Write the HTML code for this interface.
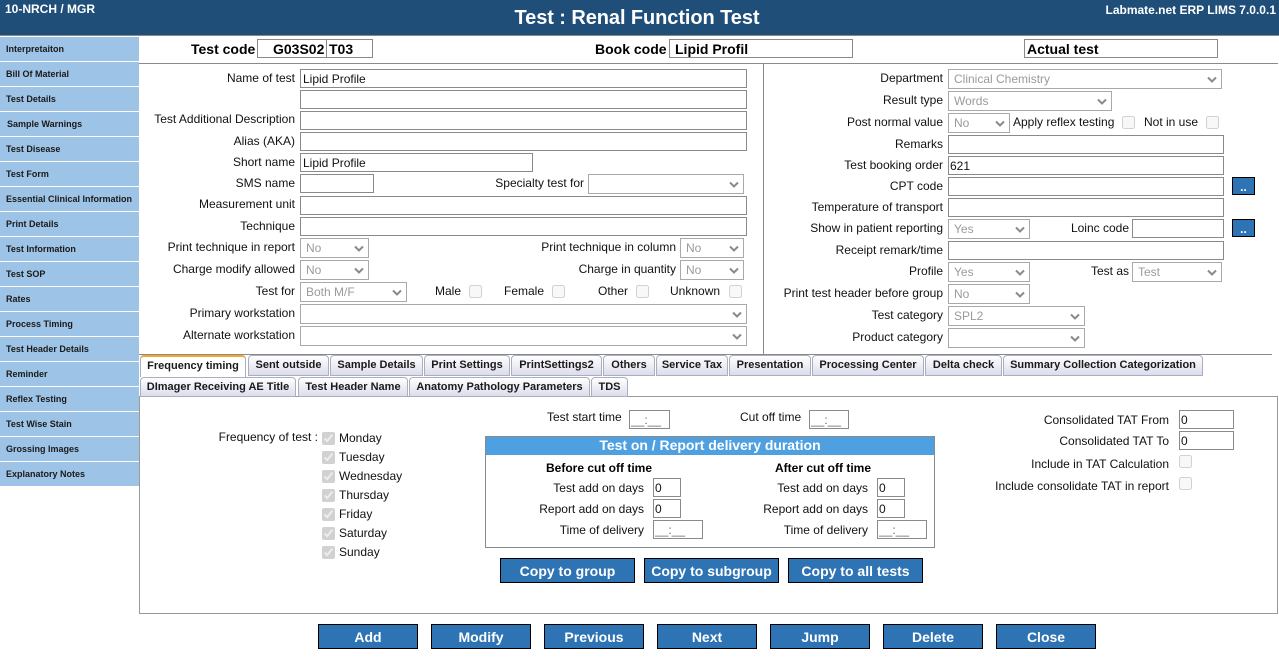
<!DOCTYPE html>
<html><head><meta charset="utf-8"><style>
html,body{margin:0;padding:0;width:1279px;height:657px;overflow:hidden;background:#fff;font-family:"Liberation Sans",Arial,sans-serif;font-size:12px;color:#111}
body{position:relative}
div,span,input{position:absolute;box-sizing:border-box}
.l{height:14px;line-height:14px;white-space:nowrap}
.a{right:984px}.b{right:336px}
.i{border:1px solid #8a8a8a;background:#fff;padding:0 0 0 1px;line-height:18px;white-space:nowrap;height:19px}
.s{border:1px solid #a9a9a9;background:#fff;color:#9a9a9a;padding-left:5px;line-height:18px;height:20px;white-space:nowrap}
.s svg{position:absolute;right:4px;top:6px;width:10px;height:7px}
input[type=checkbox]{margin:0;width:13px;height:13px}
.n{left:0;width:139px;height:24px;background:#9dc3e6;font-weight:bold;font-size:9px;line-height:23px;padding:1px 0 0 6px;color:#1a1a1a;white-space:nowrap}
.t{height:21px;border:1px solid #a8b0c0;border-bottom:1px solid #a8b0c0;border-radius:4px 4px 0 0;background:linear-gradient(#fff,#dcdcec);font-weight:bold;font-size:11px;line-height:19px;text-align:center;white-space:nowrap;color:#1a1a1a}
.btn{background:#2e74b5;border:1px solid #000;color:#fff;font-weight:bold;font-size:14px;text-align:center;white-space:nowrap}
.h{background:#8a8a8a}
.bc{font-weight:bold;font-size:14px;color:#000;border:1px solid #8a8a8a;height:19px;line-height:18px;padding-left:2px;white-space:nowrap;background:#fff}
</style></head><body>
<svg width="0" height="0" style="position:absolute"><defs><symbol id="c" viewBox="0 0 10 7"><path d="M1 1.5L5 5.5L9 1.5" fill="none" stroke="#8a8a8a" stroke-width="2"/></symbol></defs></svg>

<div style="left:0;top:0;width:1279px;height:35px;background:#1f4e79"></div>
<div class="h" style="left:0;top:35px;width:1279px;height:1px"></div>
<div class="l" style="left:5px;top:2px;color:#fff;font-weight:bold;font-size:12px">10-NRCH / MGR</div>
<div style="left:0;top:6px;width:1274px;height:24px;line-height:24px;text-align:center;color:#fff;font-weight:bold;font-size:20px;letter-spacing:-.08px">Test : Renal Function Test</div>
<div class="l" style="right:3px;top:3px;color:#fff;font-weight:bold;font-size:12px">Labmate.net ERP LIMS 7.0.0.1</div>

<div class="n" style="top:37px">Interpretaiton</div>
<div class="n" style="top:62px">Bill Of Material</div>
<div class="n" style="top:87px">Test Details</div>
<div class="n" style="top:112px;padding-left:7px">Sample Warnings</div>
<div class="n" style="top:137px">Test Disease</div>
<div class="n" style="top:162px">Test Form</div>
<div class="n" style="top:187px">Essential Clinical Information</div>
<div class="n" style="top:212px">Print Details</div>
<div class="n" style="top:237px">Test Information</div>
<div class="n" style="top:262px">Test SOP</div>
<div class="n" style="top:287px">Rates</div>
<div class="n" style="top:312px">Process Timing</div>
<div class="n" style="top:337px">Test Header Details</div>
<div class="n" style="top:362px">Reminder</div>
<div class="n" style="top:387px">Reflex Testing</div>
<div class="n" style="top:412px">Test Wise Stain</div>
<div class="n" style="top:437px">Grossing Images</div>
<div class="n" style="top:462px">Explanatory Notes</div>

<div class="l" style="left:191px;top:42px;font-weight:bold;font-size:14px;color:#000">Test code</div>
<div class="bc" style="left:257px;top:39px;width:70px;padding-left:15px">G03S02</div>
<div class="bc" style="left:326px;top:39px;width:47px">T03</div>
<div class="l" style="left:595px;top:42px;font-weight:bold;font-size:14px;color:#000">Book code</div>
<div class="bc" style="left:669px;top:39px;width:184px;padding-left:5px">Lipid Profil</div>
<div class="bc" style="left:1024px;top:39px;width:194px">Actual test</div>
<div class="h" style="left:139px;top:63px;width:1139px;height:1px"></div>
<div class="h" style="left:763px;top:63px;width:1px;height:291px"></div>
<div class="h" style="left:139px;top:354px;width:1133px;height:1px"></div>

<div class="l a" style="top:71px">Name of test</div>
<div class="i" style="left:300px;top:69px;width:447px;padding-left:2px">Lipid Profile</div>
<div class="i" style="left:300px;top:90px;width:447px"></div>
<div class="l a" style="top:112px">Test Additional Description</div>
<div class="i" style="left:300px;top:111px;width:447px"></div>
<div class="l a" style="top:134px">Alias (AKA)</div>
<div class="i" style="left:300px;top:132px;width:447px"></div>
<div class="l a" style="top:155px">Short name</div>
<div class="i" style="left:300px;top:153px;width:233px;padding-left:2px">Lipid Profile</div>
<div class="l a" style="top:176px">SMS name</div>
<div class="i" style="left:300px;top:174px;width:74px"></div>
<div class="l" style="right:695px;top:176px">Specialty test for</div>
<div class="s" style="left:588px;top:174px;width:156px"><svg><use href="#c"/></svg></div>
<div class="l a" style="top:197px">Measurement unit</div>
<div class="i" style="left:300px;top:196px;width:447px"></div>
<div class="l a" style="top:219px">Technique</div>
<div class="i" style="left:300px;top:217px;width:447px"></div>
<div class="l a" style="top:240px">Print technique in report</div>
<div class="s" style="left:300px;top:238px;width:69px">No<svg><use href="#c"/></svg></div>
<div class="l" style="right:603px;top:240px">Print technique in column</div>
<div class="s" style="left:680px;top:238px;width:64px">No<svg><use href="#c"/></svg></div>
<div class="l a" style="top:262px">Charge modify allowed</div>
<div class="s" style="left:300px;top:260px;width:69px">No<svg><use href="#c"/></svg></div>
<div class="l" style="right:603px;top:262px">Charge in quantity</div>
<div class="s" style="left:680px;top:260px;width:64px">No<svg><use href="#c"/></svg></div>
<div class="l a" style="top:284px">Test for</div>
<div class="s" style="left:300px;top:282px;width:107px">Both M/F<svg><use href="#c"/></svg></div>
<div class="l" style="left:435px;top:284px">Male</div><input type="checkbox" disabled style="left:469px;top:285px">
<div class="l" style="left:504px;top:284px">Female</div><input type="checkbox" disabled style="left:552px;top:285px">
<div class="l" style="left:598px;top:284px">Other</div><input type="checkbox" disabled style="left:636px;top:285px">
<div class="l" style="left:670px;top:284px">Unknown</div><input type="checkbox" disabled style="left:729px;top:285px">
<div class="l a" style="top:306px">Primary workstation</div>
<div class="s" style="left:300px;top:304px;width:447px"><svg><use href="#c"/></svg></div>
<div class="l a" style="top:328px">Alternate workstation</div>
<div class="s" style="left:300px;top:326px;width:447px"><svg><use href="#c"/></svg></div>

<div class="l b" style="top:71px">Department</div>
<div class="s" style="left:948px;top:69px;width:274px">Clinical Chemistry<svg><use href="#c"/></svg></div>
<div class="l b" style="top:93px">Result type</div>
<div class="s" style="left:948px;top:91px;width:164px">Words<svg><use href="#c"/></svg></div>
<div class="l b" style="top:115px">Post normal value</div>
<div class="s" style="left:948px;top:113px;width:62px">No<svg><use href="#c"/></svg></div>
<div class="l" style="left:1013px;top:115px">Apply reflex testing</div><input type="checkbox" disabled style="left:1122px;top:116px">
<div class="l" style="left:1144px;top:115px">Not in use</div><input type="checkbox" disabled style="left:1206px;top:116px">
<div class="l b" style="top:137px">Remarks</div>
<div class="i" style="left:948px;top:135px;width:276px"></div>
<div class="l b" style="top:158px">Test booking order</div>
<div class="i" style="left:948px;top:156px;width:276px">621</div>
<div class="l b" style="top:179px">CPT code</div>
<div class="i" style="left:948px;top:177px;width:276px"></div>
<div class="btn" style="left:1232px;top:177px;width:23px;height:18px;font-size:12px;line-height:18px">..</div>
<div class="l b" style="top:200px">Temperature of transport</div>
<div class="i" style="left:948px;top:198px;width:276px"></div>
<div class="l b" style="top:221px">Show in patient reporting</div>
<div class="s" style="left:948px;top:219px;width:82px">Yes<svg><use href="#c"/></svg></div>
<div class="l" style="right:150px;top:221px">Loinc code</div>
<div class="i" style="left:1132px;top:219px;width:92px"></div>
<div class="btn" style="left:1232px;top:219px;width:23px;height:18px;font-size:12px;line-height:18px">..</div>
<div class="l b" style="top:243px">Receipt remark/time</div>
<div class="i" style="left:948px;top:241px;width:276px"></div>
<div class="l b" style="top:264px">Profile</div>
<div class="s" style="left:948px;top:262px;width:82px">Yes<svg><use href="#c"/></svg></div>
<div class="l" style="right:150px;top:264px">Test as</div>
<div class="s" style="left:1132px;top:262px;width:90px">Test<svg><use href="#c"/></svg></div>
<div class="l b" style="top:286px">Print test header before group</div>
<div class="s" style="left:948px;top:284px;width:82px">No<svg><use href="#c"/></svg></div>
<div class="l b" style="top:308px">Test category</div>
<div class="s" style="left:948px;top:306px;width:137px">SPL2<svg><use href="#c"/></svg></div>
<div class="l b" style="top:330px">Product category</div>
<div class="s" style="left:948px;top:328px;width:137px"><svg><use href="#c"/></svg></div>

<div style="left:139px;top:396px;width:1139px;height:218px;border:1px solid #999;background:#fff"></div>
<div class="t" style="left:140px;top:355px;width:106px;height:22px;background:#fff;border-top:2px solid #f0a830;border-bottom:0;line-height:18px">Frequency timing</div>
<div class="t" style="left:248px;top:355px;width:81px">Sent outside</div>
<div class="t" style="left:330px;top:355px;width:93px">Sample Details</div>
<div class="t" style="left:424px;top:355px;width:86px">Print Settings</div>
<div class="t" style="left:511px;top:355px;width:91px">PrintSettings2</div>
<div class="t" style="left:603px;top:355px;width:52px">Others</div>
<div class="t" style="left:656px;top:355px;width:72px">Service Tax</div>
<div class="t" style="left:729px;top:355px;width:82px">Presentation</div>
<div class="t" style="left:812px;top:355px;width:112px">Processing Center</div>
<div class="t" style="left:925px;top:355px;width:77px">Delta check</div>
<div class="t" style="left:1003px;top:355px;width:200px">Summary Collection Categorization</div>
<div class="t" style="left:140px;top:377px;width:156px;height:20px;line-height:18px">DImager Receiving AE Title</div>
<div class="t" style="left:298px;top:377px;width:110px;height:20px;line-height:18px">Test Header Name</div>
<div class="t" style="left:409px;top:377px;width:181px;height:20px;line-height:18px">Anatomy Pathology Parameters</div>
<div class="t" style="left:591px;top:377px;width:37px;height:20px;line-height:18px">TDS</div>

<div class="l" style="right:961px;top:430px">Frequency of test :</div>
<input type="checkbox" checked disabled style="left:322px;top:432px"><div class="l" style="left:339px;top:431px">Monday</div>
<input type="checkbox" checked disabled style="left:322px;top:451px"><div class="l" style="left:339px;top:450px">Tuesday</div>
<input type="checkbox" checked disabled style="left:322px;top:470px"><div class="l" style="left:339px;top:469px">Wednesday</div>
<input type="checkbox" checked disabled style="left:322px;top:489px"><div class="l" style="left:339px;top:488px">Thursday</div>
<input type="checkbox" checked disabled style="left:322px;top:508px"><div class="l" style="left:339px;top:507px">Friday</div>
<input type="checkbox" checked disabled style="left:322px;top:527px"><div class="l" style="left:339px;top:526px">Saturday</div>
<input type="checkbox" checked disabled style="left:322px;top:546px"><div class="l" style="left:339px;top:545px">Sunday</div>

<div class="l" style="left:547px;top:410px">Test start time</div>
<div class="i" style="left:629px;top:410px;width:41px;color:#666;padding-left:1px">__:__</div>
<div class="l" style="left:740px;top:410px">Cut off time</div>
<div class="i" style="left:809px;top:410px;width:40px;color:#666;padding-left:1px">__:__</div>

<div style="left:485px;top:436px;width:450px;height:112px;border:1px solid #8a8a8a;background:#fff"></div>
<div style="left:486px;top:437px;width:448px;height:18px;background:#4fa0e0;color:#fff;font-weight:bold;font-size:14px;line-height:17px;text-align:center;letter-spacing:-.03px">Test on / Report delivery duration</div>
<div class="l" style="left:546px;top:461px;font-weight:bold;color:#000">Before cut off time</div>
<div class="l" style="left:775px;top:461px;font-weight:bold;color:#000">After cut off time</div>
<div class="l" style="right:635px;top:481px">Test add on days</div>
<div class="i" style="left:653px;top:478px;width:28px;padding-left:1px">0</div>
<div class="l" style="right:635px;top:502px">Report add on days</div>
<div class="i" style="left:653px;top:499px;width:28px;padding-left:1px">0</div>
<div class="l" style="right:635px;top:523px">Time of delivery</div>
<div class="i" style="left:653px;top:520px;width:50px;color:#666;padding-left:1px">__:__</div>
<div class="l" style="right:411px;top:481px">Test add on days</div>
<div class="i" style="left:877px;top:478px;width:28px;padding-left:1px">0</div>
<div class="l" style="right:411px;top:502px">Report add on days</div>
<div class="i" style="left:877px;top:499px;width:28px;padding-left:1px">0</div>
<div class="l" style="right:411px;top:523px">Time of delivery</div>
<div class="i" style="left:877px;top:520px;width:50px;color:#666;padding-left:1px">__:__</div>

<div class="l" style="right:110px;top:413px">Consolidated TAT From</div>
<div class="i" style="left:1179px;top:410px;width:55px;padding-left:1px">0</div>
<div class="l" style="right:110px;top:434px">Consolidated TAT To</div>
<div class="i" style="left:1179px;top:431px;width:55px;padding-left:1px">0</div>
<div class="l" style="right:110px;top:457px">Include in TAT Calculation</div>
<input type="checkbox" disabled style="left:1179px;top:455px">
<div class="l" style="right:110px;top:479px">Include consolidate TAT in report</div>
<input type="checkbox" disabled style="left:1179px;top:477px">

<div class="btn" style="left:500px;top:558px;width:135px;height:25px;line-height:25px">Copy to group</div>
<div class="btn" style="left:644px;top:558px;width:135px;height:25px;line-height:25px">Copy to subgroup</div>
<div class="btn" style="left:788px;top:558px;width:135px;height:25px;line-height:25px">Copy to all tests</div>

<div class="btn" style="left:318px;top:624px;width:100px;height:25px;line-height:24px">Add</div>
<div class="btn" style="left:431px;top:624px;width:100px;height:25px;line-height:24px">Modify</div>
<div class="btn" style="left:544px;top:624px;width:100px;height:25px;line-height:24px">Previous</div>
<div class="btn" style="left:657px;top:624px;width:100px;height:25px;line-height:24px">Next</div>
<div class="btn" style="left:770px;top:624px;width:100px;height:25px;line-height:24px">Jump</div>
<div class="btn" style="left:883px;top:624px;width:100px;height:25px;line-height:24px">Delete</div>
<div class="btn" style="left:996px;top:624px;width:100px;height:25px;line-height:24px">Close</div>
</body></html>
